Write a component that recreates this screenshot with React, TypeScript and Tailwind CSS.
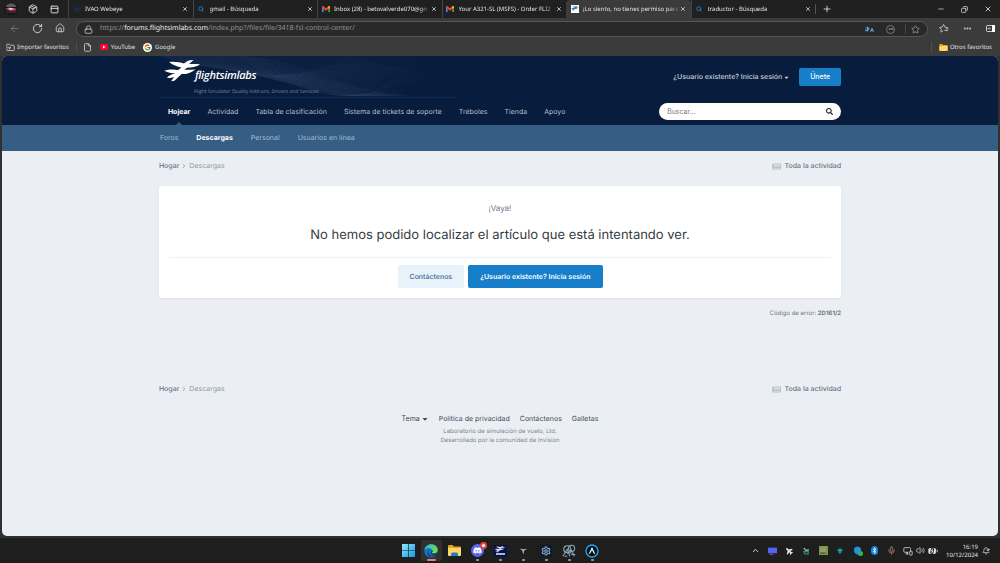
import React from "react";
import { ArrowLeft, RotateCw, House, Lock, Star, Ellipsis, Plus, X, Minus, Copy, File, FolderInput, Search, ChevronRight, ChevronUp, Mic, Volume2, Settings, BellDot, MonitorSmartphone, BatteryCharging, PanelTop, Package, ShieldCheck } from "lucide-react";
import { FcGoogle } from "react-icons/fc";
import { FaSearch, FaCaretDown, FaNewspaper, FaDiscord, FaBluetoothB, FaPlane } from "react-icons/fa";

function Gmail() {
  return (
    <svg viewBox="0 0 24 18" className="h-[6px] w-2">
      <path d="M0 2v16h5V7L0 2z" fill="#4285f4" />
      <path d="M24 2v16h-5V7l5-5z" fill="#34a853" />
      <path d="M0 2c0-2 3-3 5-1l7 6 7-6c2-2 5-1 5 1v3L12 14 0 5z" fill="#ea4335" />
      <path d="M19 1c2-2 5-1 5 1v3l-5 4z" fill="#fbbc04" />
    </svg>
  );
}

function PlaneMark({ className }: { className: string }) {
  return (
    <svg viewBox="0 0 38 24" className={className} fill="currentColor">
      <path d="M5.500 2.200C11 1.300 17 2.400 21 3.600C23 2.200 25 .800 27 .200L31 .100L26.500 4.200C30 4.300 34 4 38 4.700C34 7 29 8 24.300 8L21.500 10.300C25.500 10.300 29 10.100 33 9.800C29 13.500 23 15 18.500 14.700C15.500 17.500 13 20.300 11 21.600L7.600 22.200L10.800 17.800C8 18.600 6 19 3 18.600C6 15.700 9 14.700 12 13.900C8.500 13.600 3.500 12.900.300 11.100C5.500 9.500 10.500 9.600 15 10.400L18.400 7.900C14 7 9 5.300 5.500 2.200z" />
    </svg>
  );
}

function Windows() {
  return (
    <svg viewBox="0 0 12 12" className="size-[13px]">
      <defs>
        <linearGradient id="win" x1="0" y1="0" x2="1" y2="1">
          <stop stopColor="#90e6ff" />
          <stop offset="1" stopColor="#139be0" />
        </linearGradient>
      </defs>
      <path d="M0 0h5.700v5.700H0zM6.300 0H12v5.700H6.300zM0 6.300h5.700V12H0zM6.300 6.300H12V12H6.300z" fill="url(#win)" />
    </svg>
  );
}

function Edge() {
  return (
    <svg viewBox="0 0 24 24" className="size-[14px]">
      <defs>
        <linearGradient id="edgeTop" x1="0" y1="0" x2="1" y2=".5">
          <stop stopColor="#23b4e8" />
          <stop offset="1" stopColor="#6cdf58" />
        </linearGradient>
      </defs>
      <circle cx="12" cy="12" r="11.500" fill="#1474c4" />
      <path d="M.6 11C1.500 4.500 6.500.500 12.300.500 19 .500 23.500 5 23.500 10c0 4-3 6.500-6.500 6.500-2.500 0-4-1-3.500-2 1-1 1.500-2 1-3.500C13.500 8 10.500 6.500 7.500 6.800 4 7.200 1.500 9 .6 11z" fill="url(#edgeTop)" />
      <path d="M9 9.500c-3 4 0 10 6 10.500 2.500.200 5-.700 6.500-2-2 4-6 6-10 5.500C6 22 3.500 15 9 9.500z" fill="#0c4f9b" />
      <path d="M13.500 14.500c-.5 1 1 2 3.500 2 2 0 4-.700 5.700-2 .6 1.500.2 3.300-1.200 4.500-3.500 1.500-8.500.500-9.500-3-.4-2 .5-4 2-5 1.500 1.500.700 2.500-.5 3.500z" fill="#303030" />
    </svg>
  );
}

function Folder({ className, tray = false }: { className: string; tray?: boolean }) {
  return (
    <svg viewBox="0 0 26 22" className={className}>
      <path d="M0 2q0-2 2-2h7l3 3h12q2 0 2 2v15H0z" fill="#e2a51d" />
      <path d="M0 6h26v14q0 2-2 2H2q-2 0-2-2z" fill="#ffd768" />
      {tray && <path d="M6 22v-4q0-3 3-3h8q3 0 3 3v4z" fill="#1b7fd3" />}
    </svg>
  );
}

type Tab = { title: string; icon: React.ReactNode; active?: boolean };
const bing = <Search className="size-[6px] text-[#1384dc]" strokeWidth={3.5} />;
const tabs: Tab[] = [
  { title: "IVAO Webeye", icon: <svg viewBox="0 0 16 16" className="size-2" fill="none" stroke="#1d356b"><circle cx="8" cy="8" r="7" /><path d="M2 8h12M5 10h6" strokeWidth="2" /></svg> },
  { title: "gmail - Búsqueda", icon: bing },
  { title: "Inbox (28) - betovalverde070@gn", icon: <Gmail /> },
  { title: "Your A321-SL (MSFS) - Order FLI2", icon: <Gmail /> },
  { title: "¡Lo siento, no tienes permiso para", active: true, icon: <span className="flex size-2 items-center bg-white text-[#1976a9]"><PlaneMark className="w-2" /></span> },
  { title: "traductor - Búsqueda", icon: bing },
];

function IconButton({ label, className = "", children }: { label: string; className?: string; children: React.ReactNode }) {
  return (
    <button type="button" aria-label={label} className={`flex shrink-0 items-center justify-center ${className}`}>
      {children}
    </button>
  );
}

function TabStrip() {
  return (
    <div className="flex h-[18px] items-stretch bg-[#202020] text-[#e4e4e4]">
      <div className="flex w-[68px] shrink-0 items-center gap-3 pl-1">
        <IconButton label="Perfil">
          <svg viewBox="0 0 14 14" className="size-[14px]">
            <circle cx="7" cy="7" r="6.500" fill="#15151d" />
            <path d="M2.500 3Q7-.5 11.500 3L12 5H2z" fill="#5a5b60" />
            <path d="M1 7l4-1.500 7.500 1-1 2-5 .500z" fill="#c53a4b" />
            <path d="M4 6.500l4-.500 2 1-4 1z" fill="#e7d9dc" />
            <path d="M2 10h10" stroke="#34425d" />
          </svg>
        </IconButton>
        <IconButton label="Espacios de trabajo" className="-ml-[2px]"><Package className="size-[10px]" strokeWidth={2} /></IconButton>
        <IconButton label="Pestañas"><PanelTop className="size-[9px]" strokeWidth={2.4} /></IconButton>
      </div>
      <div className="grid flex-1 grid-cols-6">
        {tabs.map((t) => (
          <div key={t.title} className={`flex min-w-0 items-center border-l pl-[3px] pr-1 ${t.active ? "rounded-t-[4px] border-[#3b3b3b] bg-[#3b3b3b]" : "border-[#444]"}`}>
            <span className="flex w-[9px] shrink-0 justify-center">{t.icon}</span>
            <span className="ml-1 min-w-0 flex-1 overflow-hidden whitespace-nowrap [mask-image:linear-gradient(to_right,black_88%,transparent)]">{t.title}</span>
            <IconButton label="Cerrar pestaña" className="w-[7px]"><X className="size-[6px]" strokeWidth={3} /></IconButton>
          </div>
        ))}
      </div>
      <div className="flex w-[185px] shrink-0 items-center justify-between pr-2">
        <IconButton label="Nueva pestaña" className="h-[10px] border-l border-[#555] pl-[6px]"><Plus className="size-[10px]" strokeWidth={2} /></IconButton>
        <div className="flex items-center gap-4">
          <IconButton label="Minimizar"><Minus className="size-2" strokeWidth={2} /></IconButton>
          <IconButton label="Restaurar"><Copy className="size-[7px] rotate-90" strokeWidth={2.5} /></IconButton>
          <IconButton label="Cerrar"><X className="size-2" strokeWidth={2.5} /></IconButton>
        </div>
      </div>
    </div>
  );
}

function Toolbar() {
  return (
    <div className="flex h-5 items-center bg-[#3b3b3b] text-[#d6d6d6]">
      <div className="flex w-[76px] shrink-0 items-center gap-3 pl-[9px]">
        <IconButton label="Atrás"><ArrowLeft className="size-[11px] text-[#757575]" strokeWidth={2} /></IconButton>
        <IconButton label="Actualizar"><RotateCw className="size-[11px]" strokeWidth={2} /></IconButton>
        <IconButton label="Inicio"><House className="size-[10px]" strokeWidth={2} /></IconButton>
      </div>
      <div className="mt-[2px] flex h-4 flex-1 items-center rounded-full border border-[#555] bg-[#292929] px-[7px]">
        <Lock className="size-[9px] shrink-0" strokeWidth={2} />
        <a href="https://forums.flightsimlabs.com/index.php?/files/file/3418-fsl-control-center/" className="ml-[7px] text-[7px] text-[#949494]">
          https://<span className="text-[#f0f0f0]">forums.flightsimlabs.com</span>/index.php?/files/file/3418-fsl-control-center/
        </a>
        <div className="ml-auto flex items-center gap-3">
          <IconButton label="Traducir">
            <svg viewBox="0 0 18 14" className="h-[7px] w-[9px]" fill="none" stroke="#71b7e8" strokeWidth="1.500">
              <path d="M1 4h8M5 1v9M1 10q5-2 7-6M1 7q0 3 3 3 4-1 4-4M11 12l3-8 3 8M12 9h4" />
            </svg>
          </IconButton>
          <IconButton label="Información" className="size-[9px] rounded-full border border-[#767676]"><Ellipsis className="size-[6px]" /></IconButton>
          <IconButton label="Añadir a favoritos" className="-ml-[2px] h-[10px] border-l border-[#484848] pl-[5px]"><Star className="size-[9px] text-[#a1a1a1]" strokeWidth={2} /></IconButton>
        </div>
      </div>
      <div className="flex w-[72px] shrink-0 items-center gap-[14px] pl-[11px]">
        <IconButton label="Favoritos">
          <svg viewBox="0 0 22 20" className="h-[9px] w-[10px]" fill="none" stroke="currentColor" strokeWidth="1.700">
            <path d="M9 15l-5 3 1-6-4-4 6-1 3-6 3 6 7 1M14 11h7M12 14.500h8" />
          </svg>
        </IconButton>
        <IconButton label="Más"><Ellipsis className="size-[9px]" strokeWidth={3} /></IconButton>
        <IconButton label="Barra lateral">
          <svg viewBox="0 0 18 14" className="h-[7px] w-[9px]"><rect x="1" y="1" width="16" height="12" rx="2" fill="none" stroke="white" strokeWidth="1.500" /><path d="M12 0h6v14h-6z" fill="white" /><path d="M10 7H4m2-2L4 7l2 2" stroke="white" fill="none" /></svg>
        </IconButton>
      </div>
    </div>
  );
}

function Bookmarks() {
  return (
    <div className="flex h-[18px] items-center bg-[#3b3b3b] pl-[6px] pr-2 text-[#e0e0e0]">
      <a href="#importar" className="flex items-center gap-[2px]"><FolderInput className="size-[9px]" strokeWidth={2} />Importar favoritos</a>
      <a href="#archivo" aria-label="Archivo" className="ml-[7px] flex h-2 items-center border-l border-[#505050] pl-[6px]"><File className="size-[9px]" strokeWidth={2} /></a>
      <a href="#youtube" className="ml-2 flex items-center gap-[3px]">
        <svg viewBox="0 0 16 12" className="h-[6px] w-2"><rect width="16" height="12" rx="3" fill="#ff0033" /><path d="M6 3l5 3-5 3z" fill="white" /></svg>YouTube
      </a>
      <a href="#google" className="ml-2 flex items-center gap-[3px]"><span className="rounded-full bg-white p-px"><FcGoogle className="size-[7px]" /></span>Google</a>
      <a href="#otros" className="ml-auto flex items-center gap-[2px] border-l border-[#505050] pl-[7px]"><Folder className="h-[7px] w-[9px]" />Otros favoritos</a>
    </div>
  );
}

function Waves() {
  return (
    <svg viewBox="0 0 300 42" className="absolute left-0 top-0 h-[42px] w-[300px]" fill="none" stroke="#8ba5c8" strokeWidth=".4">
      <defs>
        <linearGradient id="fade" x1="0" x2="300" y1="0" y2="0" gradientUnits="userSpaceOnUse">
          <stop stopColor="white" stopOpacity=".8" />
          <stop offset=".35" stopColor="white" />
          <stop offset=".7" stopColor="white" stopOpacity=".5" />
          <stop offset=".92" stopColor="white" stopOpacity="0" />
        </linearGradient>
        <mask id="waves" maskUnits="userSpaceOnUse" x="0" y="0" width="300" height="42">
          <path d="M0 0h300v42H0z" fill="url(#fade)" stroke="none" />
        </mask>
      </defs>
      <g mask="url(#waves)">
        {Array.from({ length: 22 }, (_, i) => (
          <path key={`a${i}`} opacity={0.3 - i * 0.008} d={`M${i * 4} 0C${50 + i * 5} ${14 - i / 3} ${85 + i * 3} ${12 + i / 2} ${145 + i * 4} ${32 + i / 4}S${240 + i * 2} ${30 - i} ${250 + i * 3} 0`} />
        ))}
        {Array.from({ length: 24 }, (_, i) => (
          <path key={`b${i}`} opacity=".25" d={`M${80 + i * 5} 0Q${120 + i * 5} ${30 - i / 2} ${190 + i * 6} ${38 - i}`} />
        ))}
        {Array.from({ length: 20 }, (_, i) => (
          <path key={`c${i}`} opacity=".2" d={`M${110 + i * 5} ${20 + i / 1.3}Q${160 + i * 4} ${20 - i / 2} ${190 + i * 5} 0`} />
        ))}
      </g>
    </svg>
  );
}

function Breadcrumb({ className }: { className: string }) {
  return (
    <nav aria-label="Ruta" className={`flex h-[10px] items-center text-[#697486] ${className}`}>
      <a href="#hogar" className="font-medium">Hogar</a>
      <ChevronRight className="mx-[2px] size-[6px]" strokeWidth={2.5} />
      <span className="text-[#8b96a6]">Descargas</span>
      <a href="#actividad" className="ml-auto flex items-center gap-1 font-medium text-[#66758d]"><FaNewspaper className="size-[9px] text-[#b9c1cd]" />Toda la actividad</a>
    </nav>
  );
}

const mainNav = ["Hojear", "Actividad", "Tabla de clasificación", "Sistema de tickets de soporte", "Tréboles", "Tienda", "Apoyo"];
const subNav = ["Foros", "Descargas", "Personal", "Usuarios en línea"];

function Site() {
  return (
    <div className="mx-[2px] flex flex-1 flex-col overflow-hidden rounded-[5px] bg-[#ebeff4] font-[Inter,sans-serif] text-[7px] leading-[10px]">
      <header className="bg-[#081c3d]">
        <div className="relative mx-auto w-[68.5%]">
          <Waves />
          <div className="relative flex h-[42px] items-center justify-between">
            <a href="#inicio" className="flex h-full w-[298px] flex-col border-b border-[#0d2b55] pl-1 pt-[5px] text-white">
              <span className="flex h-[22px] items-end">
                <PlaneMark className="-mr-[6px] h-[23px] w-[38px] shrink-0" />
                <span className="font-['Open_Sans',sans-serif] text-[11px] font-semibold italic leading-[14px] tracking-tight">flightsimlabs</span>
              </span>
              <span className="mt-[5px] pl-[31px] font-['Open_Sans',sans-serif] text-[5px] leading-[9px] text-[#7d8ba3]">Flight Simulator Quality Add-ons, Drivers and Services</span>
            </a>
            <div className="flex items-center gap-[9px]">
              <a href="#sesion" className="flex items-center gap-px font-medium text-[#cbd2dd]">¿Usuario existente? Inicia sesión<FaCaretDown className="size-[7px]" /></a>
              <button type="button" className="h-[18px] rounded-[2px] bg-[#177ec9] px-[11px] font-medium text-white">Únete</button>
            </div>
          </div>
          <div className="flex h-[27px] items-center">
            <nav aria-label="Principal" className="flex h-full gap-[17px] pl-[9px] text-[#b5bdca]">
              {mainNav.map((n, i) => (
                <a key={n} href={`#nav${i}`} className={`relative flex items-center ${i === 0 ? "font-bold text-white" : ""}`}>
                  {n}
                  {i === 0 && <span className="absolute bottom-0 left-2 border-x-[3px] border-b-[3px] border-x-transparent border-b-[#365d84]" />}
                </a>
              ))}
            </nav>
            <form role="search" className="ml-auto flex h-[17px] w-[182px] items-center rounded-full bg-white px-2" onSubmit={(e) => e.preventDefault()}>
              <input aria-label="Buscar" type="search" placeholder="Buscar..." className="min-w-0 flex-1 bg-transparent outline-none placeholder:text-[#7b7b7b]" />
              <IconButton label="Buscar"><FaSearch className="size-[7px] text-[#222]" /></IconButton>
            </form>
          </div>
        </div>
      </header>
      <div className="bg-[#365d84]">
        <nav aria-label="Secundaria" className="mx-auto flex h-[26px] w-[68.5%] items-center gap-[18px] pl-px text-[#a8bbce]">
          {subNav.map((n, i) => (
            <a key={n} href={`#sub${i}`} className={i === 1 ? "font-bold text-white" : ""}>{n}</a>
          ))}
        </nav>
      </div>
      <main className="mx-auto w-[68.5%]">
        <Breadcrumb className="mt-[10px]" />
        <section className="mt-[15px] rounded-[2px] bg-white px-[10px] pb-[10px] pt-4 text-center shadow-xs">
          <p className="text-[8px] leading-[12px] text-[#6d7788]">¡Vaya!</p>
          <h1 className="mt-3 text-[13px] leading-[18px] text-[#353c41]">No hemos podido localizar el artículo que está intentando ver.</h1>
          <div className="mt-[13px] flex justify-center gap-1 border-t border-[#eff1f4] pt-[7px]">
            <a href="#contacto" className="flex h-[23px] items-center rounded-[2px] bg-[#e7f2fb] px-3 font-medium text-[#3d6594]">Contáctenos</a>
            <a href="#sesion" className="flex h-[23px] items-center rounded-[2px] bg-[#177ec9] px-3 font-semibold text-white">¿Usuario existente? Inicia sesión</a>
          </div>
        </section>
        <p className="mt-[11px] text-right text-[6px] text-[#6c7889]">Código de error: <b>2D161/2</b></p>
        <Breadcrumb className="mt-[65px]" />
      </main>
      <footer className="mt-5 text-center">
        <nav aria-label="Pie" className="flex justify-center gap-[10px] text-[#414c5b]">
          <button type="button" className="flex items-center gap-px">Tema <FaCaretDown className="size-[8px]" /></button>
          <a href="#privacidad">Política de privacidad</a>
          <a href="#contacto">Contáctenos</a>
          <a href="#galletas">Galletas</a>
        </nav>
        <p className="mt-[3px] text-[6px] leading-[9px] text-[#7d8591]">Laboratorio de simulación de vuelo, Ltd.<br />Desarrollado por la comunidad de Invision</p>
      </footer>
    </div>
  );
}

const apps: { name: string; icon: React.ReactNode; mark?: string }[] = [
  { name: "Inicio", icon: <Windows /> },
  { name: "Edge", icon: <Edge />, mark: "w-[9px] bg-[#ef806d]" },
  { name: "Archivos", icon: <Folder tray className="h-[11px] w-[13px]" /> },
  { name: "Discord", icon: <span className="relative flex size-[13px] items-center justify-center rounded-full bg-[#5865f2] text-white"><FaDiscord className="size-[9px]" /><span className="absolute -right-[3px] -top-[2px] size-[7px] rounded-full border-2 border-[#e24848] bg-white" /></span>, mark: "w-[3px] bg-[#9b9b9b]" },
  { name: "FSLabs", icon: <span className="flex h-3 w-[13px] flex-col items-center justify-center bg-[#06134a] text-[#d5ddec]"><PlaneMark className="h-[7px] w-3" /><span className="h-[2px] w-[9px] bg-[#aab6d2]" /></span>, mark: "w-[3px] bg-[#9b9b9b]" },
  { name: "Vuelo", icon: <svg viewBox="0 0 14 14" className="size-3" fill="#a9b4bd"><path d="M3 4l4 1 5-.5-3.500 2-1 4.500-1.500-4.500z" /></svg>, mark: "w-[3px] bg-[#9b9b9b]" },
  { name: "Control", icon: <span className="flex size-3 items-center justify-center bg-[#0b1b2b] text-[#839bb5]"><Settings className="size-[10px]" strokeWidth={3} /></span>, mark: "w-[3px] bg-[#9b9b9b]" },
  { name: "Red", icon: <svg viewBox="0 0 16 16" className="size-[14px]" fill="none" stroke="#91a8b3" strokeWidth="1.200"><circle cx="6" cy="6" r="4" /><circle cx="11" cy="5" r="3.500" /><path d="M1 14l5-8 3 8M6 11l5-4 3 7M3 14h3m5-2h4" /><path d="M8 7l3 5" stroke="#31a5ca" /></svg>, mark: "w-[3px] bg-[#9b9b9b]" },
  { name: "Navegación", icon: <svg viewBox="0 0 14 14" className="size-[14px]"><circle cx="7" cy="7" r="6" fill="#04131e" stroke="#23a5ed" strokeWidth="1.300" /><path d="M3.500 10.500L7 3l3.500 7.500L8.500 9 7 6 5.500 9z" fill="white" /></svg>, mark: "w-[3px] bg-[#9b9b9b]" },
];

const tray: { name: string; icon: React.ReactNode }[] = [
  { name: "Mostrar ocultos", icon: <ChevronUp className="size-[9px]" strokeWidth={2.5} /> },
  { name: "Pantalla", icon: <svg viewBox="0 0 16 14" className="h-2 w-[9px]"><path d="M0 1h16v10H0z" fill="#5364ef" /><path d="M3 12h6v2H3z" fill="#8c4db6" /></svg> },
  { name: "Avión", icon: <FaPlane className="size-2 -rotate-135" /> },
  { name: "Sincronizar", icon: <svg viewBox="0 0 14 14" className="size-2" fill="none" strokeWidth="2"><path d="M3 2l4 4 5-1" stroke="#b5c6ba" /><path d="M3 8h8v4H5z" stroke="#2f8f60" /></svg> },
  { name: "Gráficos", icon: <svg viewBox="0 0 14 14" className="size-[9px]"><path d="M0 0h14v14H0z" fill="#65a32b" /><path d="M2 2h9v8H2z" fill="#a88e78" /><path d="M2 11h8" stroke="#435b68" strokeWidth="2" /></svg> },
  { name: "Audio", icon: <svg viewBox="0 0 14 14" className="size-2"><path d="M1 4l6-2 6 2-3 5-3 4-3-4z" fill="#125b5c" /><path d="M7 3v8M4 6h6" stroke="#26b5a5" strokeWidth="2" /></svg> },
  { name: "Seguridad", icon: <span className="relative"><ShieldCheck className="size-[9px] fill-[#2395dc] text-[#2395dc]" strokeWidth={2} /><span className="absolute -bottom-px -right-px size-[5px] rounded-full bg-[#2fb84d]" /></span> },
  { name: "Bluetooth", icon: <span className="flex h-[9px] w-[7px] items-center justify-center rounded-full bg-[#0984e3] text-white"><FaBluetoothB className="size-[7px]" /></span> },
  { name: "Micrófono", icon: <Mic className="size-[9px] text-[#c88772]" strokeWidth={2} /> },
];

function Taskbar() {
  return (
    <footer className="mt-[2px] grid h-[25px] grid-cols-[1fr_auto_1fr] items-center bg-[#1e1e1e] text-[#e5e5e5]">
      <div />
      <div className="flex gap-[2px]">
        {apps.map((a) => (
          <button key={a.name} type="button" aria-label={a.name} className={`relative flex size-[21px] items-center justify-center rounded-[2px] ${a.name === "Edge" ? "bg-[#303030]" : ""}`}>
            {a.icon}
            {a.mark && <span className={`absolute bottom-0 h-[2px] rounded-full ${a.mark}`} />}
          </button>
        ))}
      </div>
      <div className="flex items-center justify-end pr-[10px]">
        <div className="flex gap-[1px]">
          {tray.map((t) => <IconButton key={t.name} label={t.name} className="h-5 w-4">{t.icon}</IconButton>)}
        </div>
        <div className="ml-1 flex items-center gap-[3px]">
          <MonitorSmartphone className="size-[10px]" strokeWidth={1.8} />
          <Volume2 className="size-[9px]" strokeWidth={1.8} />
          <BatteryCharging className="size-[10px] fill-current" strokeWidth={2} />
        </div>
        <div className="ml-2 text-right leading-[8px]">16:19<br />10/12/2024</div>
        <IconButton label="Notificaciones" className="ml-1"><BellDot className="size-2" strokeWidth={2.2} /></IconButton>
      </div>
    </footer>
  );
}

export default function App() {
  return (
    <div className="flex min-h-screen flex-col bg-[#303030] font-['Noto_Sans',sans-serif] text-[6px] leading-[10px] [text-rendering:geometricPrecision]">
      <TabStrip />
      <Toolbar />
      <Bookmarks />
      <Site />
      <Taskbar />
    </div>
  );
}
